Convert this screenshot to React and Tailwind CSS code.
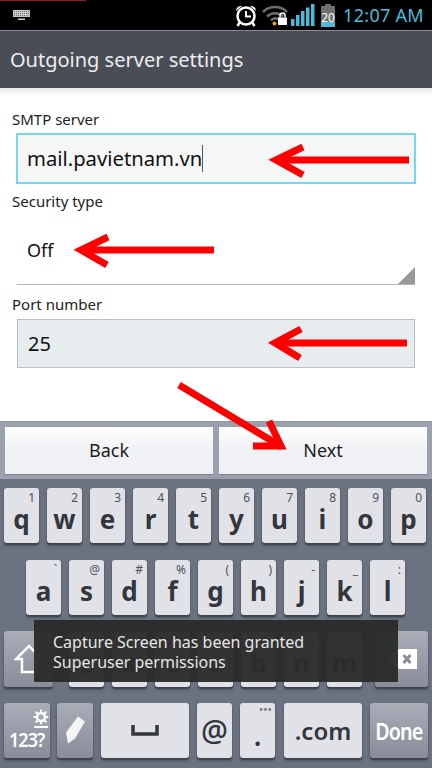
const font = "font-['Noto_Sans',sans-serif]";

function KeyboardIcon() {
  return (
    <svg width="18" height="11" viewBox="0 0 18 11" className="ml-[13px]">
      <rect x="0" y="0" width="17" height="7" fill="#c9c9c9" />
      <path d="M1 1.5h15M1 3.5h15M1 5.5h15" stroke="#555" strokeWidth="0.7" strokeDasharray="1 1" />
      <rect x="5" y="8.500" width="7" height="1.5" fill="#c9c9c9" />
    </svg>
  );
}

function AlarmIcon() {
  return (
    <svg width="22" height="23" viewBox="0 0 22 23">
      <path d="M1 7 A5 5 0 0 1 7 2 Z M21 7 A5 5 0 0 0 15 2 Z" fill="#fff" />
      <path d="M5 18l-2.500 4M17 18l2.500 4" stroke="#fff" strokeWidth="2.500" />
      <circle cx="11" cy="12" r="8.500" fill="#000" stroke="#fff" strokeWidth="2.500" />
      <path d="M11 7v5.500h5" fill="none" stroke="#fff" strokeWidth="2" />
    </svg>
  );
}

function WifiIcon() {
  return (
    <svg width="27" height="22" viewBox="0 0 27 22">
      <path d="M1 8 A17 17 0 0 1 25 8" fill="none" stroke="#6d6d6d" strokeWidth="2.500" />
      <path d="M5 12.500 A11.500 11.500 0 0 1 21 12.500" fill="none" stroke="#6d6d6d" strokeWidth="2.500" />
      <path d="M9 16.500 A6 6 0 0 1 16 15" fill="none" stroke="#6d6d6d" strokeWidth="2.500" />
      <circle cx="12.500" cy="19.500" r="2" fill="#f09a2a" />
      <path d="M18 13.500v-2a2.500 2.500 0 0 1 5 0v2" fill="none" stroke="#fff" strokeWidth="1.500" />
      <rect x="16" y="13.500" width="9" height="7.500" fill="#fff" />
    </svg>
  );
}

function SignalIcon() {
  return (
    <svg width="24" height="22" viewBox="0 0 24 22">
      <rect x="0" y="15" width="3.500" height="7" fill="#4db9d8" />
      <rect x="5" y="11" width="3.500" height="11" fill="#4db9d8" />
      <rect x="10" y="7" width="3.500" height="15" fill="#4db9d8" />
      <rect x="15" y="3.500" width="3.500" height="18.500" fill="#4db9d8" />
      <rect x="20" y="0" width="3.500" height="22" fill="#4db9d8" />
    </svg>
  );
}

function BatteryIcon() {
  return (
    <div className="relative flex h-[23px] w-[14px] flex-col items-center">
      <div className="h-[2px] w-[6px] bg-[#707070]" />
      <div className="flex h-[21px] w-[14px] flex-col bg-[#707070]">
        <div className="flex-1" />
        <div className="h-[5px] bg-[#4db9d8]" />
      </div>
      <span className={`absolute left-0 top-[7px] w-full text-center text-[12px] leading-[14px] text-white ${font}`}>20</span>
    </div>
  );
}

function StatusBar() {
  return (
    <div className="relative flex h-[30px] items-center bg-black">
      <div className="absolute left-0 top-0 h-px w-[86px] bg-[#a01818]" />
      <KeyboardIcon />
      <div className="ml-auto flex items-center">
        <AlarmIcon />
        <div className="ml-[5px]"><WifiIcon /></div>
        <div className="ml-[2px]"><SignalIcon /></div>
        <div className="ml-[6px]"><BatteryIcon /></div>
        <span className={`ml-[8px] mr-[8px] text-[18px] tracking-[0.3px] text-[#4bbcdc] ${font}`}>12:07 AM</span>
      </div>
    </div>
  );
}

function Label({ children, className }) {
  return <div className={`pl-[12px] text-[15px] leading-[20px] text-[#222] ${className}`}>{children}</div>;
}

function Form() {
  return (
    <div className={`flex h-[333px] flex-col bg-white ${font}`}>
      <div className="h-[8px] bg-gradient-to-b from-[#e8e9ea] to-white" />
      <Label className="mt-[13px]">SMTP server</Label>
      <div className="mx-[16px] mt-[4px] flex h-[51px] items-center border-2 border-[#74d6f0] bg-[#f5f6f6] pl-[9px] text-[20.25px] text-[#111]">
        mail.pavietnam.vn
        <div className="h-[27px] w-px bg-[#556]" />
      </div>
      <Label className="mt-[7px]">Security type</Label>
      <div className="relative mx-[17px] mt-[7px] flex h-[67px] items-start border-b border-[#b4b4b4] pl-[10px] pt-[19px] text-[18px] text-[#111]">
        Off
        <div className="absolute bottom-0 right-0 h-[17px] w-[17px] bg-[#999] [clip-path:polygon(100%_0,100%_100%,0_100%)]" />
      </div>
      <Label className="mt-[9px]">Port number</Label>
      <div className="mx-[17px] mt-[5px] flex h-[49px] items-center border border-[#b9bfc4] bg-[#e7ecee] pl-[10px] text-[20px] text-[#111]">
        25
      </div>
    </div>
  );
}

function ButtonBar() {
  const btn = "flex h-[48px] w-[208px] items-center justify-center border-b border-[#7c8088] bg-gradient-to-b from-white via-[#f0f1f4] to-[#eff1f5] text-[18px] text-[#1c1c1c]";
  return (
    <div className={`flex h-[58px] gap-[6px] border-t border-[#8f95a0] bg-[#9aa0ac] px-[5px] pt-[5px] ${font}`}>
      <div className={btn}>Back</div>
      <div className={btn}>Next</div>
    </div>
  );
}

const lightKey =
  "relative flex shrink-0 items-end justify-center rounded-[3px] bg-[#e0e2e7] text-[#33363c] shadow-[0_2px_1px_#3f434c,0_3px_3px_#555a65]";
const darkKey =
  "relative flex shrink-0 items-center justify-center rounded-[3px] bg-gradient-to-b from-[#a8adb8] to-[#888d99] text-white shadow-[0_2px_1px_#3f434c,0_3px_3px_#555a65]";

function LetterKey({ letter, hint, className = "w-[35px]" }) {
  return (
    <div className={`${lightKey} ${className} h-[55px] pb-[7px] text-[26px] font-bold leading-[34px]`}>
      {hint && (
        <span className="absolute right-[4px] top-[2px] text-[12px] font-normal leading-[16px] text-[#4e5259]">{hint}</span>
      )}
      {letter}
    </div>
  );
}

function Keyboard() {
  const row1 = [["q", "1"], ["w", "2"], ["e", "3"], ["r", "4"], ["t", "5"], ["y", "6"], ["u", "7"], ["i", "8"], ["o", "9"], ["p", "0"]];
  const row2 = [["a", "`"], ["s", "@"], ["d", "#"], ["f", "%"], ["g", "("], ["h", ")"], ["j", "-"], ["k", "_"], ["l", ":"]];
  const row3 = [["z", "~"], ["x", "\""], ["c", "'"], ["v", "/"], ["b", ""], ["n", "\\"], ["m", "!"]];

  return (
    <div className={`flex h-[289px] flex-col bg-[#6b7280] px-[4px] pt-[9px] ${font}`}>
      <div className="mr-[2px] flex justify-between">
        {row1.map(([l, h]) => <LetterKey key={l} letter={l} hint={h} />)}
      </div>
      <div className="mt-[17px] flex justify-between pl-[22px] pr-[23px]">
        {row2.map(([l, h]) => <LetterKey key={l} letter={l} hint={h} />)}
      </div>
      <div className="mt-[16px] flex items-center">
        <div className={`${darkKey} h-[56px] w-[49px]`}>
          <svg width="30" height="30" viewBox="0 0 30 30">
            <path d="M15 2 L28 15 H22 V28 H8 V15 H2 Z" fill="none" stroke="#fff" strokeWidth="2.500" />
          </svg>
        </div>
        <div className="ml-[16px] flex gap-[8px]">
          {row3.map(([l, h]) => <LetterKey key={l} letter={l} hint={h} />)}
        </div>
        <div className={`${darkKey} ml-[13px] h-[56px] w-[53px]`}>
          <svg width="30" height="20" viewBox="0 0 30 20">
            <path d="M0 10 L12 0 H30 V20 H12 Z" fill="#fff" />
            <path d="M16.500 6l7 8M23.500 6l-7 8" stroke="#8a8f9a" strokeWidth="3" />
          </svg>
        </div>
      </div>
      <div className="mt-[16px] flex">
        <div className={`${darkKey} h-[55px] w-[46px] flex-col`}>
          <svg width="16" height="16" viewBox="0 0 24 24" className="ml-[28px]">
            <circle cx="12" cy="12" r="6" fill="none" stroke="#fff" strokeWidth="4" />
            <path d="M12 1v5M12 18v5M1 12h5M18 12h5M4 4l4 4M16 16l4 4M20 4l-4 4M8 16l-4 4" stroke="#fff" strokeWidth="3" />
          </svg>
          <div className="ml-[27px] mt-[1px] h-[2px] w-[14px] bg-white" />
          <span className="origin-center scale-x-[0.95] text-[19px] font-semibold leading-[24px] tracking-[-1px]">123?</span>
        </div>
        <div className={`${darkKey} ml-[7px] h-[55px] w-[36px]`}>
          <svg width="22" height="30" viewBox="0 0 22 30">
            <path d="M14 0.500 L21 5.500 L11 22.500 L4 27.500 L2 16.500 Z" fill="#f4f4f4" />
          </svg>
        </div>
        <div className={`${lightKey} ml-[8px] h-[55px] w-[88px] !items-center`}>
          <svg width="28" height="12" viewBox="0 0 28 12">
            <path d="M2 0v9h24V0" fill="none" stroke="#33363c" strokeWidth="3.500" />
          </svg>
        </div>
        <div className={`${lightKey} ml-[8px] h-[55px] w-[35px] !items-center text-[30px] font-medium`}>@</div>
        <div className={`${lightKey} ml-[8px] h-[55px] w-[35px] pb-[8px] text-[28px] font-semibold leading-[30px]`}>
          <span className="absolute right-[3px] top-[0px] text-[10px] leading-[12px] tracking-[0.5px] text-[#777]">•••</span>
          .
        </div>
        <div className={`${lightKey} ml-[9px] h-[55px] w-[78px] !items-center text-[24px] font-semibold`}>.com</div>
        <div className={`${darkKey} ml-[8px] h-[55px] w-[58px] text-[24px] font-semibold`}>
          <span className="origin-center scale-x-[0.82] tracking-[-1px]">Done</span>
        </div>
      </div>
    </div>
  );
}

function Toast() {
  return (
    <div className={`absolute left-[34px] top-[620px] h-[62px] w-[364px] bg-[#2b2b2b]/[0.96] pl-[19px] pt-[12px] text-[16px] leading-[20px] text-[#e6e6e6] ${font}`}>
      <div>Capture Screen has been granted</div>
      <div>Superuser permissions</div>
    </div>
  );
}

function Arrows() {
  const head = { fill: "none", stroke: "#ff0000", strokeWidth: 7, strokeMiterlimit: 10 };
  return (
    <svg width="432" height="768" viewBox="0 0 432 768" className="pointer-events-none absolute left-0 top-0">
      <path d="M409 160H276" {...head} />
      <polyline points="303,147 276,160 303,175" {...head} />
      <path d="M214 250H81" {...head} />
      <polyline points="108,237 81,250 107,265" {...head} />
      <path d="M407 343H275" {...head} />
      <polyline points="301,329 275,343 300,358" {...head} />
      <path d="M179 385L282 447" {...head} />
      <polyline points="269,421 281,446 253,446" {...head} />
    </svg>
  );
}

export default function App() {
  return (
    <div className="relative h-[768px] w-[432px] overflow-hidden bg-white">
      <StatusBar />
      <div className={`flex h-[58px] items-center border-t border-[#8a8d93] bg-[#4a4d56] pl-[10px] text-[20px] text-[#eceded] ${font}`}>
        Outgoing server settings
      </div>
      <Form />
      <ButtonBar />
      <Keyboard />
      <Toast />
      <Arrows />
    </div>
  );
}
